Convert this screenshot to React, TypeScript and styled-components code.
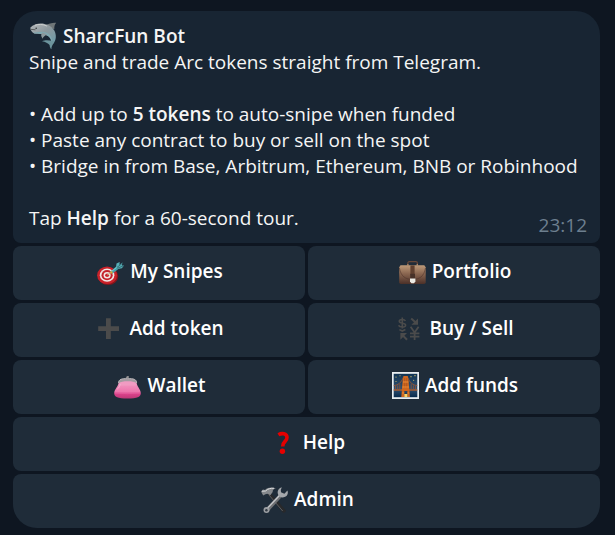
import React from 'react';
import styled, { createGlobalStyle, css } from 'styled-components';

const GlobalStyle = createGlobalStyle`
  *, *::before, *::after { box-sizing: border-box; }
  html, body, #root { min-height: 100%; }
  body {
    margin: 0;
    background: #0e1621;
    font-family: 'Open Sans', 'Noto Sans', sans-serif;
    font-size: 19px;
    line-height: 26px;
    color: #f5f5f5;
  }
`;

const Chat = styled.main`
  display: flex;
  flex-direction: column;
  gap: 3px;
  padding: 11px 15px 7px 13px;
`;

const Bubble = styled.article`
  padding: 12px 13px 5px 16px;
  border-radius: 24px 24px 8px 8px;
  background: #182533;
`;

const Title = styled.h1`
  display: flex;
  align-items: center;
  gap: 6px;
  height: 26px;
  margin: 0;
  font-size: inherit;
  font-weight: 600;
`;

const Paragraph = styled.p`
  margin: 0;
`;

const Features = styled.ul`
  list-style: none;
  margin: 26px 0;
  padding: 0;
`;

const Strong = styled.strong`
  font-weight: 600;
`;

const Footer = styled.footer`
  display: flex;
  justify-content: space-between;
`;

const Time = styled.time`
  padding-top: 7px;
  color: #6d7f8f;
`;

const Keyboard = styled.div`
  display: grid;
  grid-template-columns: 1fr 1fr;
  gap: 3px;
`;

const Key = styled.button<{ $wide?: boolean; $last?: boolean }>`
  display: flex;
  align-items: center;
  justify-content: center;
  gap: 6px;
  height: 54px;
  padding: 0 0 4px 2px;
  border: 0;
  border-radius: 8px;
  background: #1f2c39;
  color: #ffffff;
  font: inherit;
  font-weight: 600;
  cursor: pointer;
  ${(p) => p.$wide && css`grid-column: 1 / -1;`}
  ${(p) => p.$last && css`border-radius: 8px 8px 24px 24px;`}
  &:hover { background: #263645; }
`;

const KeyIcon = styled.svg.attrs({ viewBox: '0 -4 27 32', 'aria-hidden': true })`
  flex: none;
  width: 27px;
  height: 32px;
`;

const TitleIcon = styled.svg.attrs({ viewBox: '0 0 28 28', 'aria-hidden': true })`
  flex: none;
  width: 28px;
  height: 28px;
`;

const Shark = () => (
  <TitleIcon>
    <defs>
      <linearGradient id="shark" x1="0" y1="0" x2="0.8" y2="1">
        <stop offset="0" stopColor="#b4b8ba" />
        <stop offset="0.5" stopColor="#8d989d" />
        <stop offset="1" stopColor="#6f9ba8" />
      </linearGradient>
    </defs>
    <path d="M16 3.5C20 1.2 24 .5 27.2.8 25.5 2.6 25.2 4.8 25.3 7.2Z" fill="#6f7678" />
    <path d="M1.4 5.4C4.5 2.6 10 .8 15.5 1.9 23 3.4 27.5 9 26.8 15.5 26.6 18 25.6 20.2 24 22L22.5 20.6C22.2 16.5 20.4 14.3 16.5 12.7 13.5 11.4 10 12 7 11.8 4.5 11.6 2.4 9.8 1.5 7.2Z" fill="url(#shark)" />
    <path d="M4 10.2C8 10.9 11 9.3 15 10.1 20 11.2 22.6 14.4 23.6 19.5L22.6 20.7C22.2 16.5 20.4 14.3 16.5 12.7 13 11.4 9 12.4 5.5 11.4Z" fill="#7fa8b1" />
    <path d="M13.5 10.6C11.8 12 11.7 14.3 13.6 16.8 14.3 14.5 16 13.2 18.4 12.4Z" fill="#8b989c" />
    <path d="M23.8 18.8C20.8 18.5 16.3 17.6 13 19.3 16.5 19.8 19 21.3 20.6 23 20.6 24.6 21.2 26.2 22.4 27.3 22.4 24.4 23.8 22.6 25.3 20Z" fill="#6c949d" />
    <path d="M1.4 7.3 6.5 7.8" stroke="#5b5e5f" strokeWidth="1" />
    <circle cx="7.2" cy="6.2" r=".8" fill="#303638" />
    <path d="M6 3.3C9 2.1 14 2 18 4.1" fill="none" stroke="#cfd1d0" strokeWidth=".9" />
  </TitleIcon>
);

const Target = () => (
  <KeyIcon>
    <ellipse cx="11.2" cy="17.3" rx="10" ry="8.6" fill="#84151b" />
    <ellipse cx="10.1" cy="16.2" rx="10" ry="8.8" fill="#c9222a" />
    <ellipse cx="10.1" cy="16.2" rx="7.3" ry="6.6" fill="#f1e6e4" />
    <ellipse cx="10.1" cy="16.2" rx="5.6" ry="5.1" fill="#c3232b" />
    <ellipse cx="10.1" cy="16.2" rx="3.5" ry="3.2" fill="#f3e8e5" />
    <ellipse cx="10.1" cy="16.2" rx="2" ry="1.8" fill="#c9222a" />
    <path d="M10.5 16.2 15.3 12" stroke="#c5b68b" strokeWidth="1.1" />
    <path d="M13.2 12.8 19.2 7.5 21.4 9.9 15.3 14.7Z" fill="#43a0aa" />
    <path d="M14.1 12.9 20 8" stroke="#79d2d5" strokeWidth="1" />
    <path d="M19 8.2 19.5 4.5 22.7 3.1 22.4 5.9 25.4 3.4 24.9 6.5 27 6.4 24.9 9.3 20.9 10Z" fill="#56afb8" />
    <path d="M20 8.4 26 3.8M20.5 9.2 26 7" stroke="#214951" strokeWidth=".6" />
    <circle cx="14.4" cy="13.4" r="1.2" fill="#d9a238" />
  </KeyIcon>
);

const Briefcase = () => (
  <KeyIcon>
    <defs>
      <linearGradient id="leather" x1="0" y1="0" x2="0" y2="1">
        <stop offset="0" stopColor="#bd9a79" />
        <stop offset=".45" stopColor="#8a6650" />
        <stop offset="1" stopColor="#4b3028" />
      </linearGradient>
    </defs>
    <path d="M8.8 7V4.3Q8.8 2.7 10.4 2.7H16.8Q18.4 2.7 18.4 4.3V7" fill="none" stroke="#684839" strokeWidth="1.3" />
    <path d="M8.2 5.8h1.4M17.6 5.8H19" stroke="#c3a27d" />
    <path d="M1.5 6.3H25.3L26.7 8.3V23.3Q26.7 25 25 25H1.9Q.2 25 .2 23.3V8.3Z" fill="url(#leather)" />
    <path d="M.4 9C2 18 7 20.4 13.5 20.4S25 18 26.5 9" fill="none" stroke="#50352d" strokeWidth=".6" />
    <path d="M11.4 6.4h4.2V16H11.4Z" fill="#60402f" />
    <path d="M11.2 14.8H16V20H11.2Z" fill="#473128" />
    <path d="M11 19.5H16.4V22.5L15 24.3H12.4L11 22.5Z" fill="#eceae3" />
  </KeyIcon>
);

const Plus = () => (
  <KeyIcon>
    <path d="M10 2.2H14.8V10.3H23V15H14.8V23H10V15H2.2V10.3H10Z" fill="#4b4b4b" />
  </KeyIcon>
);

const Exchange = () => (
  <KeyIcon fill="none" stroke="#4b4b4b" strokeWidth="1.6">
    <path d="M9.4 5C8.6 3 3.3 2.8 3.3 5.3 3.3 8 9.6 6.6 9.6 9.2 9.6 11.8 3.6 11.5 2.7 9.3M6.3 1.6V12.6" />
    <path d="M14.6 10.8 18.6 16.4 22.6 10.8M18.6 16V24M14 17.4H23.4M14 20.6H23.4" strokeWidth="1.8" />
    <path d="M15.2 2.4 19.4 6.2" strokeWidth="2" />
    <path d="M22 2.4V8.8H15.4Z" fill="#4b4b4b" stroke="none" />
    <path d="M6.8 19.4 11 23.8" strokeWidth="2" />
    <path d="M4.4 23.8V17H11Z" fill="#4b4b4b" stroke="none" />
    <path d="M3.4 13.6 6.3 15 9.4 13.6" />
  </KeyIcon>
);

const Purse = () => (
  <KeyIcon>
    <defs>
      <linearGradient id="purse" x1="0" y1="0" x2="0" y2="1">
        <stop offset="0" stopColor="#f2a0c5" />
        <stop offset=".6" stopColor="#ee75ad" />
        <stop offset=".75" stopColor="#d94189" />
        <stop offset="1" stopColor="#bd3777" />
      </linearGradient>
    </defs>
    <path d="M4.6 8.5C5 13.5.2 15.8.2 20.2 .2 23.6 3.5 25.5 13.5 25.5S26.8 23.6 26.8 20.2C26.8 15.8 22.2 13.5 22.6 8.5Z" fill="url(#purse)" />
    <path d="M4.6 10C4.6 6 8 5.6 13.6 5.6S22.6 6 22.6 10" fill="#a39aa0" stroke="#b9b6b8" strokeWidth="1" />
    <path d="M5.2 10C7 7.8 20.2 7.8 22 10V12.4H5.2Z" fill="#f19bc2" />
    <path d="M12 5 14.8 3.4M12.8 3.3 14.6 5.3" stroke="#999698" strokeWidth="1.2" />
    <path d="M3.3 16C5.4 14.5 6 12.8 6.2 11" fill="none" stroke="#f5b1d0" />
    <path d="M1 19.8Q13 21.6 26 19.8" fill="none" stroke="#e75a9e" strokeWidth=".7" />
  </KeyIcon>
);

const Bridge = () => (
  <KeyIcon>
    <defs>
      <linearGradient id="night" x1="0" y1="0" x2="0" y2="1">
        <stop offset="0" stopColor="#113453" />
        <stop offset=".65" stopColor="#315070" />
        <stop offset="1" stopColor="#092b4d" />
      </linearGradient>
    </defs>
    <path d="M0-1H27V26H0Z" fill="#e8edf0" />
    <path d="M1.7.8H25.3V24.2H1.7Z" fill="url(#night)" />
    <path d="M1.7 12.5C6 12.5 9.4 9.5 11.2 4.5M15.8 4.5C17.6 9.5 21 12.5 25.3 12.5" fill="none" stroke="#a8592f" strokeWidth=".8" />
    <path d="M1.7 17H25.3" stroke="#b5602e" strokeWidth="1.4" />
    <path d="M3.5 13v4M5.7 12.3v5M7.8 10.6v6.5M19.2 10.6v6.5M21.4 12.3v5M23.5 13v4" stroke="#925636" strokeWidth=".8" />
    <path d="M9.3 24 10.6 8 11.4 3H15.8L16.6 8 17.9 24H15.4V18H12.3V24Z" fill="#cf661e" />
    <path d="M12.7 5V15M14.7 5V15" stroke="#a4521f" strokeWidth=".7" />
    <path d="M11 9H16.4M10.4 14H16.9M10.1 20H12.2M15.4 20H17.3" stroke="#ee8c35" />
    <path d="M12.3 21H15.4V24H12.3Z" fill="#ffd363" />
    <g fill="#f3d66b">
      <circle cx="4" cy="4" r=".6" />
      <circle cx="8" cy="2.7" r=".5" />
      <circle cx="19" cy="3.7" r=".6" />
      <circle cx="23" cy="2.7" r=".6" />
      <circle cx="21.7" cy="7.2" r=".5" />
      <circle cx="4" cy="8.5" r=".5" />
    </g>
  </KeyIcon>
);

const Question = () => (
  <KeyIcon>
    <path d="M8.4 4.7C11.6 2.9 17 3.1 17 7.6 17 11.6 12.7 11.3 12.7 16.4" fill="none" stroke="#e60000" strokeWidth="3.6" />
    <circle cx="12.4" cy="21.2" r="2.7" fill="#e60000" />
  </KeyIcon>
);

const Tools = () => (
  <KeyIcon>
    <path d="M6.8 7.5 9.5 5.7 25 23.5Q24.8 26 22 25.8Z" fill="#28292b" />
    <path d="M8 8 21.7 24" stroke="#606266" strokeWidth=".9" />
    <path d="M5.8 23.3 20.5 7.5" stroke="#6f7174" strokeWidth="4" />
    <path d="M5 22.7 19.2 7.7" stroke="#c5c7ca" strokeWidth="1.3" />
    <path d="M20.8.3C17.3 1.2 15.7 4.7 17.2 7.7 18.7 10.7 22.6 11.2 25.1 9.3 27 7.7 27.2 5.3 26.4 3.4L23.4 6.8 20 5.2 19.8 3Z" fill="#a4a7ab" />
    <circle cx="5.5" cy="23" r="3" fill="#9b9ea2" />
    <circle cx="5.4" cy="23.2" r="1.2" fill="#303942" />
    <path d="M0 4.4 2 2.6 4 3C6.7.2 11 0 14.8 1.3 12.4 2 11.5 3.3 11.7 5L9.3 8.2 6.3 6.8 4.4 7.2 2.2 8.4Z" fill="#85888c" />
    <path d="M1 4.2 4.5 4C7 1.6 9.7 1.1 13 1.3" fill="none" stroke="#dcdee0" />
  </KeyIcon>
);

const actions: { label: string; Icon: React.FC; wide?: boolean; last?: boolean }[] = [
  { label: 'My Snipes', Icon: Target },
  { label: 'Portfolio', Icon: Briefcase },
  { label: 'Add token', Icon: Plus },
  { label: 'Buy / Sell', Icon: Exchange },
  { label: 'Wallet', Icon: Purse },
  { label: 'Add funds', Icon: Bridge },
  { label: 'Help', Icon: Question, wide: true },
  { label: 'Admin', Icon: Tools, wide: true, last: true },
];

export default function App() {
  return (
    <>
      <GlobalStyle />
      <Chat>
        <Bubble>
          <Title><Shark />SharcFun Bot</Title>
          <Paragraph>Snipe and trade Arc tokens straight from Telegram.</Paragraph>
          <Features>
            <li>• Add up to <Strong>5 tokens</Strong> to auto-snipe when funded</li>
            <li>• Paste any contract to buy or sell on the spot</li>
            <li>• Bridge in from Base, Arbitrum, Ethereum, BNB or Robinhood</li>
          </Features>
          <Footer>
            <Paragraph>Tap <Strong>Help</Strong> for a 60-second tour.</Paragraph>
            <Time dateTime="23:12">23:12</Time>
          </Footer>
        </Bubble>
        <Keyboard>
          {actions.map(({ label, Icon, wide, last }) => (
            <Key key={label} type="button" $wide={wide} $last={last}>
              <Icon />
              <span>{label}</span>
            </Key>
          ))}
        </Keyboard>
      </Chat>
    </>
  );
}
